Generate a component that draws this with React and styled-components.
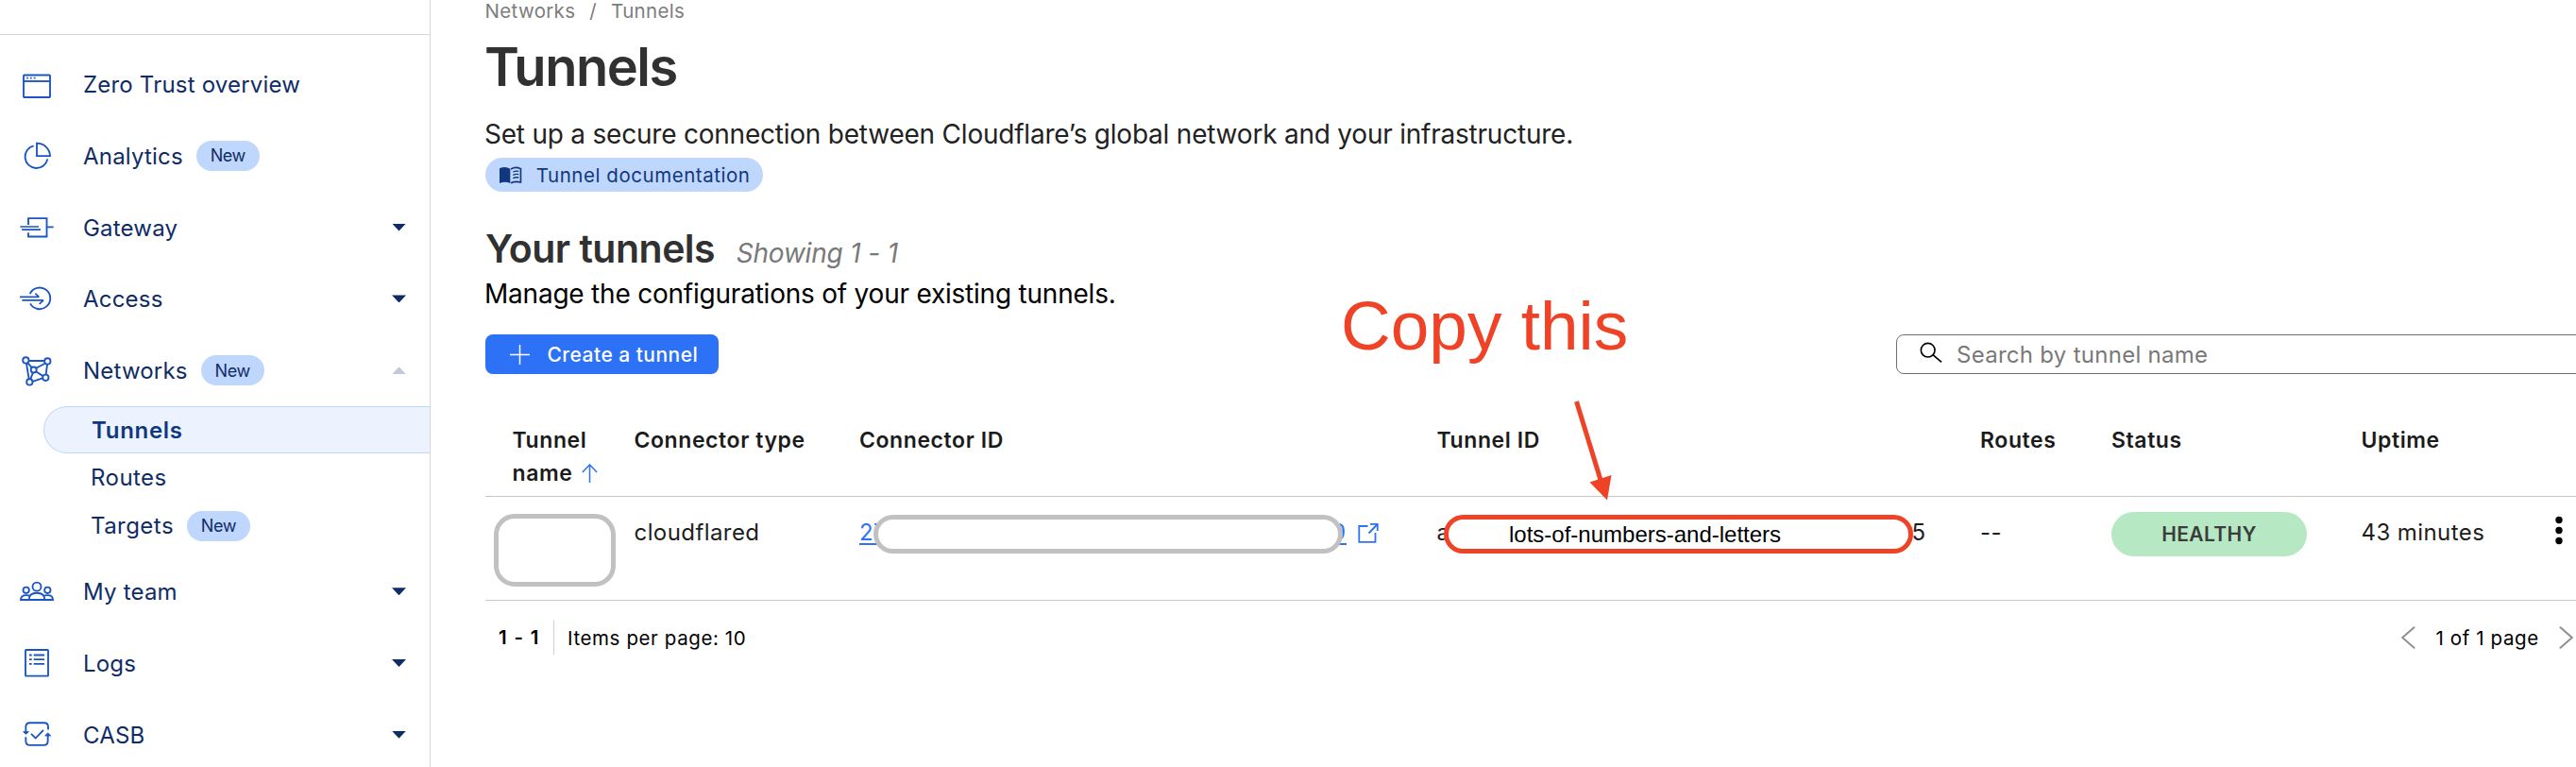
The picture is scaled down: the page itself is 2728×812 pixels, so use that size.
import React from 'react';
import styled, { createGlobalStyle, css } from 'styled-components';

const GlobalStyle = createGlobalStyle`
  * { box-sizing: border-box; }
  html, body { margin: 0; padding: 0; background: #fff; overflow: hidden; }
  body { font-family: Inter, "Liberation Sans", sans-serif; color: #1d1d1d; }
`;

const Page = styled.div`
  position: relative;
  display: flex;
  width: 100%;
  height: 812px;
  overflow: hidden;
`;

/* ---------- Sidebar ---------- */

const Sidebar = styled.nav`
  flex: 0 0 456px;
  height: 100%;
  overflow: hidden;
  border-right: 1px solid #d5d7d8;
  color: #0f2c66;
`;

const SidebarTop = styled.div`
  height: 37px;
  border-bottom: 1px solid #d5d7d8;
  margin-bottom: 14.1px;
`;

const NavItem = styled.div`
  display: flex;
  align-items: center;
  height: 75.8px;
  padding: 0 25px 0 18px;
  font-size: 24px;
  letter-spacing: 0.2px;
  white-space: nowrap;
`;

const NavLabel = styled.span`
  padding-top: 1px;
`;

const NavIcon = styled.svg`
  flex: none;
  width: 42px;
  height: 36px;
  margin-right: 28px;
  fill: none;
  stroke: #1b55c4;
  stroke-width: 5.6;
`;

const Caret = styled.span`
  width: 15px;
  height: 8px;
  margin-left: auto;
  background: ${(p) => (p.$up ? '#c3cada' : '#0f2c66')};
  clip-path: ${(p) => (p.$up ? 'polygon(0 100%, 50% 0, 100% 100%)' : 'polygon(0 0, 100% 0, 50% 100%)')};
`;

const Badge = styled.span`
  display: inline-flex;
  align-items: center;
  justify-content: center;
  width: 67px;
  height: 32px;
  margin-left: 14px;
  border-radius: 16px;
  background: #bfd6fd;
  font-size: 18px;
  letter-spacing: -0.4px;
`;

const SubMenu = styled.div`
  padding-bottom: 6.3px;
`;

const SubItem = styled.div`
  display: flex;
  align-items: center;
  height: 51px;
  padding-left: 96px;
  font-size: 24px;
  letter-spacing: 0.45px;
  ${(p) =>
    p.$active &&
    css`
      height: 50px;
      margin-left: 46px;
      padding-left: 50px;
      border: 1px solid #bfd6fd;
      border-right: 0;
      border-radius: 25px 0 0 25px;
      background: #ecf3fe;
      color: #11387f;
      font-weight: 600;
      letter-spacing: 0.7px;
    `}
`;

/* ---------- Main ---------- */

const Main = styled.main`
  flex: 1;
  min-width: 0;
  padding-left: 58px;
  white-space: nowrap;
`;

const Breadcrumb = styled.div`
  display: flex;
  height: 24px;
  line-height: 24px;
  gap: 15px;
  margin-left: -0.5px;
  font-size: 20.5px;
  letter-spacing: 0.33px;
  color: #7d7d7d;
`;

const Title = styled.h1`
  margin: 13px 0 0 -1px;
  font-size: 56px;
  line-height: 68px;
  font-weight: 600;
  letter-spacing: -1.5px;
  color: #313131;
`;

const Lead = styled.p`
  margin: ${(p) => p.$top}px 0 0 -1px;
  font-size: 28px;
  line-height: 40px;
  letter-spacing: -0.22px;
  color: ${(p) => p.$color};
`;

const DocPill = styled.a`
  display: flex;
  align-items: center;
  gap: 14.5px;
  width: 294px;
  height: 36px;
  margin-top: 5px;
  padding-left: 14px;
  border-radius: 18px;
  background: #bfd6fd;
  color: #11387f;
  font-size: 20.5px;
  letter-spacing: 0.54px;
`;

const SectionHead = styled.div`
  display: flex;
  align-items: baseline;
  height: 50px;
  margin-top: 35px;
`;

const SectionTitle = styled.h2`
  margin: 0;
  font-size: 41px;
  line-height: 50px;
  font-weight: 600;
  letter-spacing: -0.5px;
  color: #313131;
`;

const Showing = styled.em`
  margin-left: 22.5px;
  font-size: 28px;
  letter-spacing: -0.18px;
  color: #797979;
`;

const Toolbar = styled.div`
  display: flex;
  height: 42px;
  margin-top: 23px;
`;

const CreateButton = styled.button`
  display: flex;
  align-items: center;
  gap: 18.5px;
  width: 247px;
  height: 42px;
  padding: 1px 0 0 26px;
  border: 0;
  border-radius: 8px;
  background: #2c71f6;
  color: #fff;
  font: 500 21px Inter, sans-serif;
  letter-spacing: 0.47px;
`;

const SearchBox = styled.div`
  display: flex;
  align-items: center;
  flex: 0 0 760px;
  margin-left: auto;
  margin-right: -40px;
  padding: 1px 0 0 24px;
  border: 1px solid #707070;
  border-radius: 8px;
  font-size: 24px;
  letter-spacing: 0.28px;
  color: #797979;
  svg { margin: 0 15px 5px 0; }
`;

const columns = '129px 238.5px 611.5px 575.5px 139px 264.5px 1fr';

const TableHead = styled.div`
  display: grid;
  grid-template-columns: ${columns};
  height: 130px;
  padding: 53px 0 6px 28.5px;
  border-bottom: 1px solid #c6c8c9;
  font-size: 23px;
  line-height: 35px;
  font-weight: 600;
  letter-spacing: 0.58px;
  color: #1b1b1b;
`;

const HeadCell = styled.div`
  white-space: normal;
`;

const SortArrow = styled.svg`
  margin-left: 10px;
  vertical-align: -2px;
`;

const TableRow = styled.div`
  display: grid;
  grid-template-columns: ${columns};
  height: 110px;
  padding: 20px 0 0 28.5px;
  border-bottom: 1px solid #c6c8c9;
  font-size: 24px;
  line-height: 36px;
  letter-spacing: 0.42px;
`;

const Cell = styled.div`
  position: relative;
  display: flex;
  align-items: flex-start;
`;

const IdLink = styled.a`
  display: flex;
  justify-content: space-between;
  width: 515.5px;
  height: 31px;
  border-bottom: 2px solid #2c71f6;
  color: #2c71f6;
`;

const TunnelId = styled.span`
  display: flex;
  justify-content: space-between;
  width: 518px;
`;

const Mask = styled.div`
  position: absolute;
  left: ${(p) => p.$x}px;
  top: ${(p) => p.$y}px;
  width: ${(p) => p.$w}px;
  height: ${(p) => p.$h}px;
  border: 5px solid ${(p) => p.$color || '#c1c1c1'};
  border-radius: ${(p) => p.$r || 20.5}px;
  background: #fff;
  padding-left: 64px;
  font: 24px/31px "Liberation Sans", Arial, sans-serif;
  letter-spacing: 0;
  color: #000;
`;

const OpenIcon = styled.svg`
  flex: none;
  margin: 7px 0 0 11px;
`;

const Status = styled.span`
  display: flex;
  align-items: center;
  justify-content: center;
  width: 207px;
  height: 47px;
  margin-top: -4px;
  border-radius: 23.5px;
  background: #b6e8c4;
  color: #3c3c3c;
  font-size: 21px;
  font-weight: 600;
  letter-spacing: 0.35px;
`;

const RowMenu = styled.svg`
  margin: 0 14px 0 auto;
`;

const Footer = styled.div`
  display: flex;
  align-items: center;
  height: 36px;
  margin-top: 21px;
  padding: 0 3px 0 14px;
  font-size: 20.5px;
  letter-spacing: 0.6px;
  color: #000;
`;

const Range = styled.strong`
  width: 59px;
  height: 36px;
  line-height: 36px;
  margin-right: 14px;
  border-right: 1px solid #d0d0d0;
  font-weight: 600;
  letter-spacing: 1.3px;
`;

const Pager = styled.div`
  display: flex;
  align-items: center;
  gap: 21.2px;
  margin-left: auto;
  svg { fill: none; stroke: #8c8f94; stroke-width: 2; stroke-linecap: round; }
`;

/* ---------- Annotation ---------- */

const ACCENT = '#ee4326';

const Note = styled.div`
  position: absolute;
  left: 1420px;
  top: 305px;
  font: 73px/80px "Liberation Sans", Arial, sans-serif;
  color: ${ACCENT};
  white-space: nowrap;
`;

const NoteArrow = styled.svg`
  position: absolute;
  left: 1660px;
  top: 420px;
`;

const icons = {
  overview: (
    <NavIcon viewBox="54 213 126 108">
      <rect x="75" y="238.5" width="84" height="70.5" rx="2" />
      <path d="M75 258H159" />
      <path d="M84.5 248h5M96 248h5M107.5 248h5" />
    </NavIcon>
  ),
  analytics: (
    <NavIcon viewBox="54 440 126 108">
      <path d="M107 462A36 36 0 1 0 151 504" />
      <path d="M117 454V494.5H159A42 41 0 0 0 117 454Z" />
    </NavIcon>
  ),
  gateway: (
    <NavIcon viewBox="54 668 126 108">
      <path d="M90 713V692.5H148.5V750.5H90V738M148.5 720H170" />
      <path d="M64 719H123M69 728.5H129" strokeWidth="5" />
    </NavIcon>
  ),
  access: (
    <NavIcon viewBox="54 895 126 108">
      <path d="M95 934A34 34 0 1 1 96 965" />
      <path d="M63 944H124M112 933L124 944M70 954.5H138M125 966.5L138 954.5" strokeWidth="5" />
    </NavIcon>
  ),
  networks: (
    <NavIcon viewBox="54 1122.6 126 108">
      <path d="M92 1146.5H141M150 1158L146 1190M135 1202L104 1212M92 1204L84 1155M88 1153L101 1168M115 1170L143 1155M115 1181L137 1195M105 1184L97 1204" />
      <circle cx="82" cy="1145" r="9.5" />
      <circle cx="151" cy="1148" r="9.5" />
      <circle cx="145" cy="1200" r="9.5" />
      <circle cx="94" cy="1214" r="9.5" />
      <circle cx="107" cy="1175" r="9" />
    </NavIcon>
  ),
  team: (
    <NavIcon viewBox="54 624.6 126 108">
      <circle cx="117" cy="664" r="13.5" />
      <circle cx="83" cy="675" r="9.5" />
      <circle cx="151" cy="675" r="9.5" />
      <path d="M92 705.5C92 690 103 684 117 684S142 690 142 705.5ZM92 705.5H66C66 695 72 691 83 691Q91 691 94 693M142 705.5H168C168 695 162 691 151 691Q143 691 140 693" />
    </NavIcon>
  ),
  logs: (
    <NavIcon viewBox="54 852 126 108">
      <rect x="81" y="864" width="72" height="83" rx="2" />
      <path d="M93 880.5h8M107 880.5h34M93 894.5h8M107 894.5h34M93 908.5h8M107 908.5h34" />
    </NavIcon>
  ),
  casb: (
    <NavIcon viewBox="54 1079.4 126 108">
      <path d="M82 1126V1108Q82 1095 95 1095H140Q153 1095 153 1108V1117M152 1132V1153Q152 1166 139 1166H95Q82 1166 82 1153V1140" />
      <path d="M99 1130L113 1144L138 1118" />
      <path d="M74 1123.5L82 1131L91 1123.5ZM143 1136L152 1127.5L161 1136Z" fill="#1b55c4" strokeWidth="3" />
    </NavIcon>
  ),
};

const primaryNav = [
  { icon: 'overview', label: 'Zero Trust overview' },
  { icon: 'analytics', label: 'Analytics', badge: true },
  { icon: 'gateway', label: 'Gateway', caret: 'down' },
  { icon: 'access', label: 'Access', caret: 'down' },
  { icon: 'networks', label: 'Networks', badge: true, caret: 'up' },
];

const secondaryNav = [
  { icon: 'team', label: 'My team', caret: 'down' },
  { icon: 'logs', label: 'Logs', caret: 'down' },
  { icon: 'casb', label: 'CASB', caret: 'down' },
];

function NavEntry({ icon, label, badge, caret }) {
  return (
    <NavItem>
      {icons[icon]}
      <NavLabel>{label}</NavLabel>
      {badge && <Badge>New</Badge>}
      {caret && <Caret $up={caret === 'up'} />}
    </NavItem>
  );
}

export default function App() {
  return (
    <Page>
      <GlobalStyle />
      <Sidebar>
        <SidebarTop />
        {primaryNav.map((item) => <NavEntry key={item.label} {...item} />)}
        <SubMenu>
          <SubItem $active>Tunnels</SubItem>
          <SubItem>Routes</SubItem>
          <SubItem>Targets<Badge>New</Badge></SubItem>
        </SubMenu>
        {secondaryNav.map((item) => <NavEntry key={item.label} {...item} />)}
      </Sidebar>

      <Main>
        <Breadcrumb><span>Networks</span><span>/</span><span>Tunnels</span></Breadcrumb>
        <Title>Tunnels</Title>
        <Lead $top={17} $color="#222">Set up a secure connection between Cloudflare’s global network and your infrastructure.</Lead>
        <DocPill>
          <svg width="25.3" height="19" viewBox="54 78 76 57">
            <path d="M57 85Q75 76 91 86V132Q75 124 57 132Z" fill="#11387f" />
            <path d="M93 87Q108 78 124.5 86V129Q108 124 93 131" fill="none" stroke="#11387f" strokeWidth="5" />
            <path d="M100 96Q108 92 118 94M100 106Q108 102 118 104M100 116Q108 112 118 114" fill="none" stroke="#11387f" strokeWidth="4" />
          </svg>
          Tunnel documentation
        </DocPill>

        <SectionHead>
          <SectionTitle>Your tunnels</SectionTitle>
          <Showing>Showing 1 - 1</Showing>
        </SectionHead>
        <Lead $top={3} $color="#000">Manage the configurations of your existing tunnels.</Lead>

        <Toolbar>
          <CreateButton>
            <svg width="21" height="21" viewBox="0 0 21 21" stroke="#fff" strokeWidth="1.5">
              <path d="M10.5 0V21M0 10.5H21" />
            </svg>
            Create a tunnel
          </CreateButton>
          <SearchBox>
            <svg width="24" height="22.7" viewBox="98 50 72 68" fill="none" stroke="#000" strokeWidth="5">
              <circle cx="124" cy="76" r="22" />
              <path d="M140 91L167 114" />
            </svg>
            Search by tunnel name
          </SearchBox>
        </Toolbar>

        <TableHead>
          <HeadCell>
            Tunnel<br />name
            <SortArrow width="17" height="20" viewBox="0 0 17 20" fill="none" stroke="#2c71f6" strokeWidth="1.5">
              <path d="M8.5 20V1M0.8 9L8.5 1L16.2 9" />
            </SortArrow>
          </HeadCell>
          <HeadCell>Connector type</HeadCell>
          <HeadCell>Connector ID</HeadCell>
          <HeadCell>Tunnel ID</HeadCell>
          <HeadCell>Routes</HeadCell>
          <HeadCell>Status</HeadCell>
          <HeadCell>Uptime</HeadCell>
        </TableHead>
        <TableRow>
          <Cell><Mask $x={-20} $y={-2.5} $w={129} $h={77} $r={22} /></Cell>
          <Cell>cloudflared</Cell>
          <Cell>
            <IdLink><span>27</span><span>9</span></IdLink>
            <OpenIcon width="24" height="23" viewBox="1437 553 24 23" fill="none" stroke="#2c71f6" strokeWidth="1.8">
              <path d="M1448.5 557H1439.3V573.8H1456.5V564M1449.5 564.5L1458.7 555M1451 554.8H1458.8V562" />
            </OpenIcon>
            <Mask $x={15} $y={-1.5} $w={496.5} $h={41} />
          </Cell>
          <Cell>
            <TunnelId><span>a</span><span>5</span></TunnelId>
            <Mask $x={7.5} $y={-1.5} $w={497} $h={41} $color={ACCENT}>lots-of-numbers-and-letters</Mask>
          </Cell>
          <Cell>--</Cell>
          <Cell><Status>HEALTHY</Status></Cell>
          <Cell>
            43 minutes
            <RowMenu width="8" height="36" viewBox="0 0 8 36">
              <circle cx="4" cy="4.5" r="3.7" />
              <circle cx="4" cy="15.5" r="3.7" />
              <circle cx="4" cy="26.5" r="3.7" />
            </RowMenu>
          </Cell>
        </TableRow>

        <Footer>
          <Range>1 - 1</Range>
          Items per page: 10
          <Pager>
            <svg width="15" height="24" viewBox="0 0 15 24"><path d="M13.5 1.2L1.2 12L13.5 22.8" /></svg>
            1 of 1 page
            <svg width="15" height="24" viewBox="0 0 15 24"><path d="M1.5 1.2L13.8 12L1.5 22.8" /></svg>
          </Pager>
        </Footer>
      </Main>

      <Note>Copy this</Note>
      <NoteArrow width="60" height="120" viewBox="1660 420 60 120">
        <path d="M1669.5 425L1695 508" stroke={ACCENT} strokeWidth="5" />
        <path d="M1683.5 510.5L1706.5 503L1702 529.5Z" fill={ACCENT} />
      </NoteArrow>
    </Page>
  );
}
